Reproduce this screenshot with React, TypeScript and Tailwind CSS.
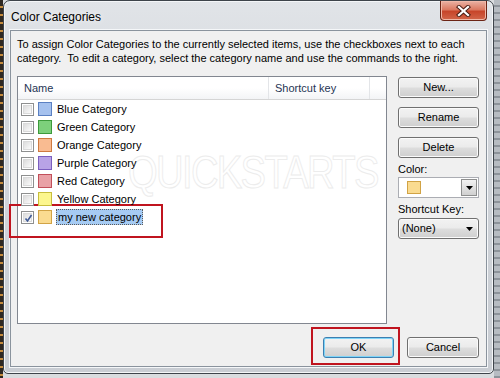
import React from "react";

const FONT = "font-['Liberation_Sans',Arial,sans-serif]";

const BTN =
  "h-[21px] rounded-[3px] border border-[#707070] bg-[linear-gradient(180deg,#f2f2f2_0%,#ebebeb_48%,#dddddd_52%,#cfcfcf_100%)] shadow-[inset_0_0_0_1px_#fbfbfb] text-[11px] text-black flex items-center justify-center";

const categories = [
  { name: "Blue Category", swatch: "bg-[#a5c1ee] border-[#5b80c2]" },
  { name: "Green Category", swatch: "bg-[#7dd07b] border-[#3d9a3b]" },
  { name: "Orange Category", swatch: "bg-[#f9bb91] border-[#cf7a3f]" },
  { name: "Purple Category", swatch: "bg-[#b8a3e6] border-[#7b5fbf]" },
  { name: "Red Category", swatch: "bg-[#e9a1a6] border-[#c24f5a]" },
  { name: "Yellow Category", swatch: "bg-[#fcf68e] border-[#c8be3d]" },
];

function Checkbox({ checked }: { checked?: boolean }) {
  return (
    <div className="w-[13px] h-[13px] shrink-0 border border-[#8e8f8f] bg-white p-[1px]">
      <div className="relative w-full h-full border border-[#dadada] bg-[linear-gradient(135deg,#dcdcdc,#fbfbfb)]">
        {checked && (
          <svg className="absolute left-[0px] top-[0px]" width="9" height="9" viewBox="0 0 9 9">
            <path d="M1.5 4.5L3.5 7L7.5 1" fill="none" stroke="#3f5a96" strokeWidth="1.6" />
          </svg>
        )}
      </div>
    </div>
  );
}

function Arrow() {
  return (
    <svg width="7" height="4" viewBox="0 0 7 4">
      <path d="M0 0h7L3.5 4z" fill="#000" />
    </svg>
  );
}

function Row({ name, swatch, checked, selected }: { name: string; swatch: string; checked?: boolean; selected?: boolean }) {
  return (
    <div className="relative z-10 h-[18px] flex items-center pl-[3px]">
      <Checkbox checked={checked} />
      <div className={`ml-[4px] w-[14px] h-[14px] shrink-0 border ${swatch}`} />
      <span
        className={
          selected
            ? "ml-[4px] px-[1px] h-[16px] leading-[14px] border border-dotted border-[#5a5a5a] bg-[#a6cbf3] text-black text-[11px]"
            : "ml-[5px] text-black text-[11px] leading-[14px]"
        }
      >
        {name}
      </span>
    </div>
  );
}

export default function App() {
  return (
    <div className={`relative w-[500px] h-[378px] overflow-hidden flex bg-[#d9dcdf] ${FONT}`}>
      {/* desktop edge on the left */}
      <div className="w-[3px] h-full bg-[repeating-linear-gradient(180deg,#2e2822_0px,#2e2822_6px,#c48a3c_6px,#c48a3c_8px)]" />

      {/* window */}
      <div className="w-[491px] h-[374px] flex flex-col rounded-t-[7px] rounded-b-[5px] border border-[#3e444b] bg-[linear-gradient(180deg,#e1e4e8_0%,#d3d7dc_30%,#c9cdd3_100%)] shadow-[inset_0_0_0_1px_#f4f6f8]">
        {/* title bar */}
        <div className="h-[29px] flex items-start">
          <span className="mt-[7px] ml-[7px] text-[12px] text-black [text-shadow:0_0_6px_#ffffff]">
            Color Categories
          </span>
          <div className="ml-auto mr-[6px] w-[47px] h-[20px] rounded-b-[4px] border border-t-0 border-[#6b2415] bg-[linear-gradient(180deg,#eab2a4_0%,#db7a62_45%,#c7452a_55%,#d2664a_100%)] shadow-[inset_0_0_0_1px_#f0b8a8] flex items-center justify-center">
            <svg width="15" height="12" viewBox="0 0 15 12">
              <path d="M3 2L12 10M12 2L3 10" stroke="#4a1d14" strokeWidth="4.2" strokeLinecap="square" />
              <path d="M3 2L12 10M12 2L3 10" stroke="#ffffff" strokeWidth="2.3" strokeLinecap="square" />
            </svg>
          </div>
        </div>

        {/* client area */}
        <div className="mx-[6px] h-[337px] border border-[#8a939d] bg-[#f0f0f0] shadow-[0_0_0_1px_#f5f7f9] flex flex-col px-[6px] pt-[6px]">
          <p className="text-[11px] leading-[14px] text-black">
            To assign Color Categories to the currently selected items, use the checkboxes next to each
            <br />
            category.&nbsp; To edit a category, select the category name and use the commands to the right.
          </p>

          <div className="mt-[11px] flex gap-[11px]">
            {/* list view */}
            <div className="relative w-[370px] h-[248px] border border-[#828790] bg-white">
              {/* watermark */}
              <div className="absolute left-[110px] top-[72px] text-[46px] leading-[46px] tracking-[-2px] text-transparent [-webkit-text-stroke:1px_#ececec] scale-x-[0.83] origin-left whitespace-nowrap">
                QUICKSTARTS
              </div>

              <div className="relative z-10 h-[23px] flex border-b border-[#d5d5d5] bg-[linear-gradient(180deg,#ffffff_0%,#ffffff_50%,#f3f4f6_100%)] text-[11px] text-[#1f3554]">
                <div className="w-[251px] pl-[6px] flex items-center border-r border-[#e3e5e8]">Name</div>
                <div className="w-[101px] pl-[6px] flex items-center border-r border-[#e3e5e8]">Shortcut key</div>
                <div className="flex-1" />
              </div>
              {categories.map((c) => (
                <Row key={c.name} name={c.name} swatch={c.swatch} />
              ))}
              <Row name="my new category" swatch="bg-[#fadb90] border-[#d1a345]" checked selected />
            </div>

            {/* side commands */}
            <div className="w-[81px] pt-[1px] flex flex-col">
              <div className={BTN}>New...</div>
              <div className={`mt-[9px] ${BTN}`}>Rename</div>
              <div className={`mt-[9px] ${BTN}`}>Delete</div>
              <div className="mt-[4px] text-[11px] leading-[14px] text-black">Color:</div>
              <div className="mt-[1px] h-[21px] flex items-center border border-[#abadb3] bg-white">
                <div className="ml-[8px] w-[14px] h-[13px] border border-[#d1a345] bg-[#fadb90]" />
                <div className="ml-auto mr-[1px] w-[16px] h-[17px] border border-[#8e8f8f] bg-[linear-gradient(180deg,#f2f2f2,#d0d0d0)] flex items-center justify-center">
                  <Arrow />
                </div>
              </div>
              <div className="mt-[4px] text-[11px] leading-[14px] text-black">Shortcut Key:</div>
              <div className="mt-[2px] h-[21px] rounded-[3px] border border-[#707070] bg-[linear-gradient(180deg,#f2f2f2_0%,#ebebeb_48%,#dddddd_52%,#cfcfcf_100%)] shadow-[inset_0_0_0_1px_#fbfbfb] flex items-center pl-[3px] pr-[5px] text-[11px] text-black">
                <span>(None)</span>
                <span className="ml-auto">
                  <Arrow />
                </span>
              </div>
            </div>
          </div>

          {/* dialog buttons */}
          <div className="mt-[13px] flex justify-end gap-[13px] pr-[1px]">
            <div className="w-[71px] h-[21px] rounded-[3px] border border-[#3c7fb1] bg-[linear-gradient(180deg,#f2f2f2_0%,#ebebeb_48%,#dddddd_52%,#cfcfcf_100%)] shadow-[inset_0_0_0_1px_#7fd4f7] text-[11px] text-black flex items-center justify-center">
              OK
            </div>
            <div className={`w-[72px] ${BTN}`}>Cancel</div>
          </div>
        </div>
      </div>

      {/* desktop edge on the right */}
      <div className="flex-1 h-full bg-[repeating-linear-gradient(180deg,#b7bcc2_0px,#b7bcc2_5px,#8d939a_5px,#8d939a_7px)]" />

      {/* annotation boxes */}
      <div className="absolute left-[9px] top-[204px] w-[154px] h-[34px] border-2 border-[#c0141f]" />
      <div className="absolute left-[311px] top-[327px] w-[89px] h-[38px] border-2 border-[#c0141f]" />
    </div>
  );
}
